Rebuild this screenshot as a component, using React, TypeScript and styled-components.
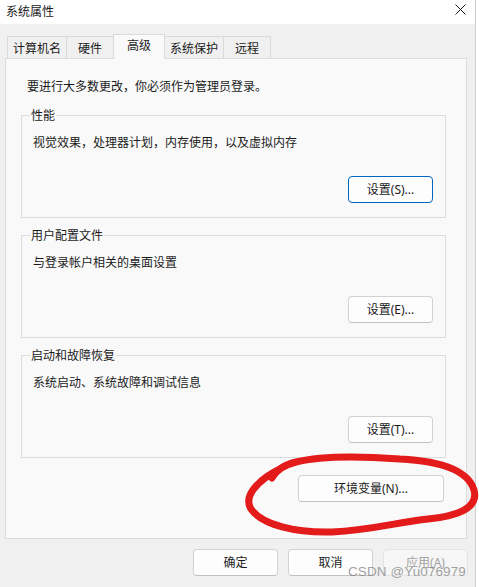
import React from "react";
import styled, { createGlobalStyle } from "styled-components";

const GlobalStyle = createGlobalStyle`
  html, body { margin: 0; padding: 0; background: #ffffff; }
  body {
    font-family: "Noto Sans", "Noto Sans CJK SC", sans-serif;
    font-size: 12px;
    color: #1b1b1b;
  }
  * { box-sizing: border-box; }
`;

const Page = styled.div`
  position: relative;
  width: 479px;
  height: 587px;
  overflow: hidden;
  background: #ffffff;
`;

const Window = styled.div`
  width: 476px;
  height: 587px;
  background: #f0f0f0;
  border-right: 1px solid #cfcfcf;
  display: flex;
  flex-direction: column;
`;

const TitleBar = styled.div`
  height: 24px;
  background: #ffffff;
  display: flex;
  align-items: flex-start;
  justify-content: space-between;
  padding: 3px 9px 0 6px;
`;

const Title = styled.span`
  font-size: 12px;
  line-height: 16px;
  font-family: "Noto Sans CJK SC", sans-serif;
  color: #1b1b1b;
`;

const CloseGlyph = styled.svg`
  display: block;
  margin-top: 1px;
`;

const Body = styled.div`
  padding: 10px 8px 0 5px;
  display: flex;
  flex-direction: column;
`;

const TabStrip = styled.div`
  display: flex;
  align-items: flex-end;
  height: 24px;
  padding-left: 2px;
  position: relative;
  z-index: 1;
`;

const Tab = styled.div<{ $active?: boolean }>`
  height: ${(p) => (p.$active ? "25px" : "22px")};
  margin-bottom: ${(p) => (p.$active ? "-1px" : "0")};
  min-width: ${(p) => (p.$active ? "52px" : "48px")};
  margin-right: -1px;
  padding: ${(p) => (p.$active ? "2px 5px 0" : "3px 5px 0")};
  border: 1px solid #dadada;
  border-bottom: none;
  background: ${(p) => (p.$active ? "#f9f9f9" : "#f0f0f0")};
  position: relative;
  z-index: ${(p) => (p.$active ? 2 : 1)};
  text-align: center;
  font-family: "Noto Sans CJK SC", sans-serif;
  font-size: 12px;
  line-height: 16px;
  color: #1b1b1b;
  white-space: nowrap;
`;

const Panel = styled.div`
  border: 1px solid #dcdcdc;
  background: #f9f9f9;
  padding: 19px 20px 36px 15px;
  display: flex;
  flex-direction: column;
`;

const Intro = styled.p`
  margin: 0 0 0 6px;
  font-family: "Noto Sans CJK SC", sans-serif;
  font-size: 12px;
  line-height: 16px;
`;

const GroupBox = styled.fieldset<{ $first?: boolean }>`
  margin: ${(p) => (p.$first ? "13px" : "9px")} 0 0 0;
  padding: 0 12px 14px 11px;
  border: 1px solid #dcdcdc;
  min-width: 0;
  display: flex;
  flex-direction: column;
`;

const Legend = styled.legend`
  padding: 0 1px;
  margin-left: -3px;
  font-family: "Noto Sans CJK SC", sans-serif;
  font-size: 12px;
  line-height: 16px;
  color: #1b1b1b;
`;

const Desc = styled.div`
  margin-top: 11px;
  font-family: "Noto Sans CJK SC", sans-serif;
  font-size: 12px;
  line-height: 16px;
`;

const ButtonRow = styled.div<{ $top: number; $right?: number }>`
  display: flex;
  justify-content: flex-end;
  gap: 10px;
  margin-top: ${(p) => p.$top}px;
  padding-right: ${(p) => p.$right ?? 0}px;
`;

const Button = styled.button<{ $primary?: boolean; $width?: number }>`
  width: ${(p) => p.$width ?? 85}px;
  height: 27px;
  padding: 0;
  border-radius: 4px;
  border: 1px solid ${(p) => (p.$primary ? "#0067c0" : "#d2d2d2")};
  border-bottom-color: ${(p) => (p.$primary ? "#0067c0" : "#c2c2c2")};
  background: #fdfdfd;
  font-family: "Noto Sans", "Noto Sans CJK SC", sans-serif;
  font-size: 12px;
  line-height: 16px;
  color: #1b1b1b;
  cursor: default;

  &:disabled {
    background: #f6f6f6;
    border-color: #e3e3e3;
    color: #a2a2a2;
  }
`;

const Footer = styled.div`
  display: flex;
  justify-content: flex-end;
  gap: 10px;
  margin-top: 10px;
  margin-right: -1px;
`;

const Scribble = styled.svg`
  position: absolute;
  left: 0;
  top: 0;
  pointer-events: none;
`;

const Watermark = styled.span`
  position: absolute;
  left: 348px;
  top: 564px;
  font-family: "Liberation Sans", Arial, sans-serif;
  font-size: 13.5px;
  line-height: 16px;
  letter-spacing: 0.1px;
  color: rgba(130, 130, 130, 0.75);
  pointer-events: none;
  white-space: nowrap;
`;

const tabs = ["计算机名", "硬件", "高级", "系统保护", "远程"];

const groups = [
  { title: "性能", desc: "视觉效果，处理器计划，内存使用，以及虚拟内存", btn: "设置(S)...", primary: true },
  { title: "用户配置文件", desc: "与登录帐户相关的桌面设置", btn: "设置(E)...", primary: false },
  { title: "启动和故障恢复", desc: "系统启动、系统故障和调试信息", btn: "设置(T)...", primary: false },
];

export default function App() {
  return (
    <>
      <GlobalStyle />
      <Page>
        <Window>
          <TitleBar>
            <Title>系统属性</Title>
            <CloseGlyph width="11" height="11" viewBox="0 0 11 11">
              <path d="M0.5 0.5 L10.5 10.5 M10.5 0.5 L0.5 10.5" stroke="#1b1b1b" strokeWidth="1" fill="none" />
            </CloseGlyph>
          </TitleBar>
          <Body>
            <TabStrip>
              {tabs.map((t) => (
                <Tab key={t} $active={t === "高级"}>
                  {t}
                </Tab>
              ))}
            </TabStrip>
            <Panel>
              <Intro>要进行大多数更改，你必须作为管理员登录。</Intro>
              {groups.map((g, i) => (
                <GroupBox key={g.title} $first={i === 0}>
                  <Legend>{g.title}</Legend>
                  <Desc>{g.desc}</Desc>
                  <ButtonRow $top={26}>
                    <Button $primary={g.primary}>{g.btn}</Button>
                  </ButtonRow>
                </GroupBox>
              ))}
              <ButtonRow $top={17} $right={2}>
                <Button $width={146}>环境变量(N)...</Button>
              </ButtonRow>
            </Panel>
            <Footer>
              <Button>确定</Button>
              <Button>取消</Button>
              <Button disabled>应用(A)</Button>
            </Footer>
          </Body>
        </Window>
        <Scribble width="479" height="587" viewBox="0 0 479 587">
          <path
            d="M272 478 C 276 470, 284 465, 296 462 C 320 456, 360 456, 400 459 C 440 461, 468 470, 474 490 C 479 508, 458 516, 428 519 C 398 522, 372 530, 332 532 C 296 533, 262 525, 251 509 C 243 496, 258 480, 280 469"
            stroke="#e41b1b"
            strokeWidth="7"
            fill="none"
            strokeLinecap="round"
            strokeLinejoin="round"
          />
        </Scribble>
        <Watermark>CSDN @Yu076979</Watermark>
      </Page>
    </>
  );
}
